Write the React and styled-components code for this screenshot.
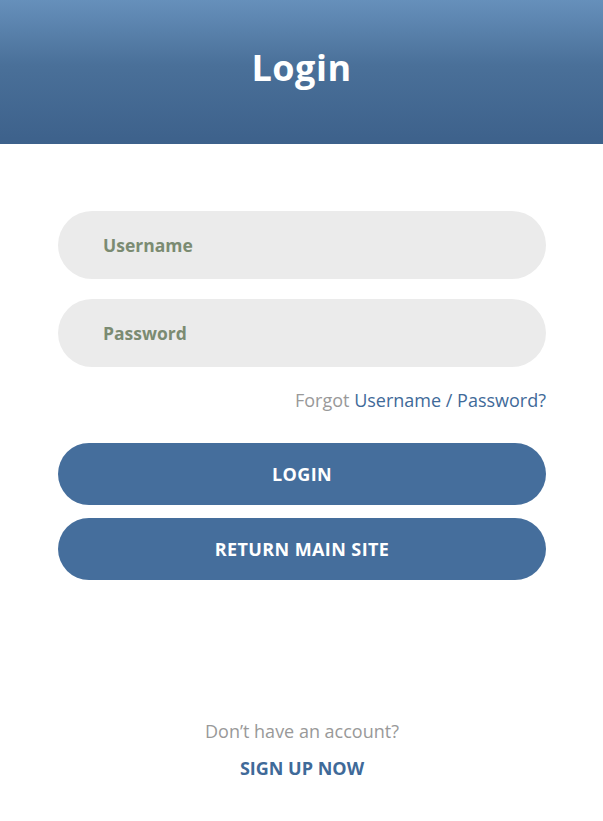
import React from "react";
import styled, { createGlobalStyle } from "styled-components";

const Global = createGlobalStyle`
  html, body { margin: 0; padding: 0; background: #fff; }
  body { font-family: "Open Sans", "Noto Sans", sans-serif; }
  * { box-sizing: border-box; }
`;

const Page = styled.div`
  width: 603px;
  min-height: 821px;
  display: flex;
  flex-direction: column;
`;

const Header = styled.header`
  height: 144px;
  background: linear-gradient(to bottom, #6690bb 0%, #4a7099 45%, #3d618b 100%);
  display: flex;
  align-items: center;
  justify-content: center;
`;

const Title = styled.h1`
  margin: 0;
  color: #fff;
  font-size: 36px;
  font-weight: 700;
  letter-spacing: 0.5px;
  line-height: 1;
  padding-bottom: 8px;
`;

const Body = styled.main`
  padding: 67px 57px 0 58px;
  display: flex;
  flex-direction: column;
`;

const Field = styled.input`
  height: 68px;
  width: 100%;
  border: none;
  outline: none;
  border-radius: 34px;
  background: #ebebeb;
  padding: 0 45px;
  font-family: inherit;
  font-size: 17.5px;
  font-weight: 700;
  color: #7b8b72;
  margin-bottom: ${(p) => p.$mb || 0}px;
  &::placeholder { color: #7b8b72; opacity: 1; }
`;

const Forgot = styled.p`
  margin: 21px 0 0;
  text-align: right;
  font-size: 18px;
  line-height: 24px;
  color: #999;
`;

const Link = styled.a`
  color: #3f6a99;
  text-decoration: none;
  font-weight: ${(p) => (p.$bold ? 700 : 400)};
`;

const Button = styled.button`
  height: 62px;
  width: 100%;
  border: none;
  border-radius: 31px;
  background: #456e9c;
  color: #fff;
  font-family: inherit;
  font-size: 18px;
  font-weight: 700;
  letter-spacing: 0.4px;
  text-transform: uppercase;
  margin-top: ${(p) => p.$mt}px;
`;

const Footer = styled.div`
  margin-top: 139px;
  display: flex;
  flex-direction: column;
  align-items: center;
  gap: 13px;
`;

const Muted = styled.span`
  font-size: 18px;
  line-height: 24px;
  color: #999;
`;

const SignUp = styled(Link)`
  font-size: 18px;
  line-height: 24px;
  text-transform: uppercase;
`;

export default function App() {
  return (
    <Page>
      <Global />
      <Header>
        <Title>Login</Title>
      </Header>
      <Body>
        <Field placeholder="Username" $mb={20} />
        <Field placeholder="Password" type="password" />
        <Forgot>
          Forgot <Link href="#">Username / Password?</Link>
        </Forgot>
        <Button $mt={31}>Login</Button>
        <Button $mt={13}>Return Main Site</Button>
        <Footer>
          <Muted>Don’t have an account?</Muted>
          <SignUp href="#" $bold>Sign up now</SignUp>
        </Footer>
      </Body>
    </Page>
  );
}
